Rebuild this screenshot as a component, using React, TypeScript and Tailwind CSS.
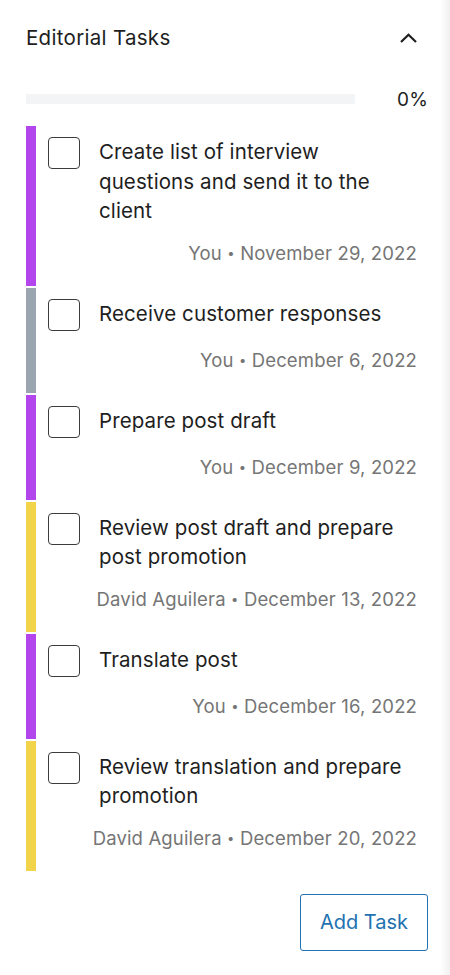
import { useState } from 'react'

type Task = {
  id: number
  title: string
  author: string
  date: string
  color: string
}

const tasks: Task[] = [
  { id: 1, title: 'Create list of interview questions and send it to the client', author: 'You', date: 'November 29, 2022', color: 'bg-[#b245ec]' },
  { id: 2, title: 'Receive customer responses', author: 'You', date: 'December 6, 2022', color: 'bg-[#9ba5b0]' },
  { id: 3, title: 'Prepare post draft', author: 'You', date: 'December 9, 2022', color: 'bg-[#b245ec]' },
  { id: 4, title: 'Review post draft and prepare post promotion', author: 'David Aguilera', date: 'December 13, 2022', color: 'bg-[#f1d449]' },
  { id: 5, title: 'Translate post', author: 'You', date: 'December 16, 2022', color: 'bg-[#b245ec]' },
  { id: 6, title: 'Review translation and prepare promotion', author: 'David Aguilera', date: 'December 20, 2022', color: 'bg-[#f1d449]' },
]

export default function App() {
  const [done, setDone] = useState<number[]>([])
  const [open, setOpen] = useState(true)

  const toggle = (id: number) => {
    setDone(prev => (prev.includes(id) ? prev.filter(x => x !== id) : [...prev, id]))
  }

  const percent = Math.round((done.length / tasks.length) * 100)

  return (
    <div className="w-[450px] h-[975px] flex bg-white text-[#1e1e1e]" style={{ fontFamily: 'Inter, "Noto Sans", sans-serif' }}>
      <div className="w-[440px] shrink-0 pl-[26px] pr-[12px]">
        {/* Header */}
        <div className="flex items-center justify-between pt-[23px] h-[53px]">
          <h2 className="text-[20.5px] leading-[30px] font-normal tracking-[0.3px]">Editorial Tasks</h2>
          <button onClick={() => setOpen(!open)} className="mr-[11px] w-[17px] h-[30px] flex items-center justify-center">
            <svg width="17" height="10" viewBox="0 0 17 10" fill="none">
              <path d="M1 9L8.5 1.8L16 9" stroke="#1e1e1e" strokeWidth="2.2" />
            </svg>
          </button>
        </div>

        {open && (
          <>
            {/* Progress */}
            <div className="flex items-center justify-between mt-[34px] h-[26px]">
              <div className="w-[329px] h-[10px] bg-[#f3f4f5] -mt-[2px]">
                <div className="h-full bg-[#2271b1]" style={{ width: `${percent}%` }} />
              </div>
              <span className="text-[19px] leading-[26px] tracking-[0.2px]">{percent}%</span>
            </div>

            {/* Tasks */}
            <div className="mt-[13px] flex flex-col gap-[2px]">
              {tasks.map(task => (
                <div key={task.id} className="flex">
                  <div className={`w-[10px] shrink-0 ${task.color}`} />
                  <div className="flex-1 pl-[12px] pr-[11px] pt-[11px] pb-[20px]">
                    <div className="flex items-start gap-[19px] min-h-[34px]">
                      <button
                        onClick={() => toggle(task.id)}
                        className="w-[32px] h-[32px] shrink-0 rounded-[4px] border-[1.5px] border-[#3c3c3c] bg-white flex items-center justify-center"
                      >
                        {done.includes(task.id) && (
                          <svg width="20" height="20" viewBox="0 0 20 20" fill="none">
                            <path d="M4 10l4 4 8-8" stroke="#1e1e1e" strokeWidth="2" />
                          </svg>
                        )}
                      </button>
                      <p className={`text-[20.5px] leading-[29.5px] tracking-[0.1px] ${done.includes(task.id) ? 'line-through text-[#757575]' : ''}`}>
                        {task.title}
                      </p>
                    </div>
                    <div className="mt-[14px] text-right text-[18.5px] leading-[26px] tracking-[0.15px] text-[#757575]">
                      {task.author} <span className="text-[13px] align-[2px]">•</span> {task.date}
                    </div>
                  </div>
                </div>
              ))}
            </div>

            <div className="flex justify-end mt-[23px]">
              <button className="w-[128px] h-[57px] rounded-[3px] border-[1.5px] border-[#2271b1] text-[#2271b1] text-[20px] bg-white">
                Add Task
              </button>
            </div>
          </>
        )}
      </div>
      <div className="flex-1 bg-gradient-to-r from-white to-[#f0f0f0]" />
    </div>
  )
}
